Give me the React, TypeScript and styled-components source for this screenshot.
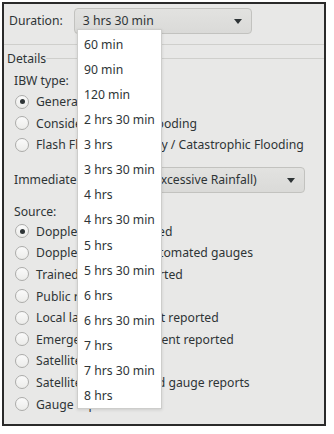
import React from "react";
import styled, { createGlobalStyle } from "styled-components";

const GlobalStyle = createGlobalStyle`
  body {
    margin: 0;
    background: #ffffff;
    font-family: "Noto Sans", "Open Sans", sans-serif;
    font-size: 12.2px;
    color: #2e3436;
  }
`;

const Page = styled.div`
  padding: 2px;
  width: 334px;
  height: 434px;
  box-sizing: border-box;
`;

const Frame = styled.div`
  position: relative;
  width: 324px;
  height: 424px;
  box-sizing: border-box;
  border: 2px solid #2a2a2a;
  background: #e8e8e7;
  overflow: hidden;
`;

const TopBar = styled.div`
  height: 40px;
  display: flex;
  align-items: flex-start;
  padding: 4px 0 0 5px;
  box-sizing: border-box;
  gap: 11px;
`;

const Label = styled.div<{ $height?: number }>`
  height: ${(p) => p.$height ?? 26}px;
  line-height: ${(p) => p.$height ?? 26}px;
  white-space: nowrap;
`;

const Combo = styled.div<{ $width?: number }>`
  position: relative;
  ${(p) => (p.$width ? `width: ${p.$width}px;` : "flex: 1;")}
  height: 26px;
  line-height: 24px;
  box-sizing: border-box;
  padding-left: 8px;
  border: 1px solid #c2c2bf;
  border-radius: 4px;
  background: linear-gradient(#e2e2e0, #dadad8);
  white-space: nowrap;
  overflow: hidden;
`;

const Arrow = styled.span`
  position: absolute;
  right: 9px;
  top: 10px;
  width: 0;
  height: 0;
  border-left: 4.5px solid transparent;
  border-right: 4.5px solid transparent;
  border-top: 5px solid #2e3436;
`;

const Separator = styled.div`
  height: 1px;
  background: #cfcfcc;
`;

const GroupTitle = styled.div`
  height: 26px;
  display: flex;
  align-items: center;
  padding-left: 3px;
`;

const TitleLine = styled.div`
  flex: 1;
  height: 1px;
  margin-top: 1px;
  background: #cfcfcc;
`;

const GroupBody = styled.div`
  padding: 0 19px 0 10px;
  display: flex;
  flex-direction: column;
`;

const RadioRow = styled.div<{ $h: number }>`
  height: ${(p) => p.$h}px;
  display: flex;
  align-items: center;
  gap: 7px;
  padding-left: 1px;
  white-space: nowrap;
`;

const RadioCircle = styled.span<{ $checked?: boolean }>`
  flex-shrink: 0;
  width: 14px;
  height: 14px;
  box-sizing: border-box;
  border-radius: 50%;
  border: 1px solid #acacaa;
  background: linear-gradient(#fafafa, #ececea);
  display: flex;
  align-items: center;
  justify-content: center;

  &::after {
    content: "";
    width: 5px;
    height: 5px;
    border-radius: 50%;
    background: ${(p) => (p.$checked ? "#2e3436" : "transparent")};
  }
`;

const ImmediateRow = styled.div`
  margin-top: 11px;
  display: flex;
  align-items: center;
  gap: 6px;
`;

const SourceLabel = styled(Label)`
  margin-top: 9px;
`;

const Popup = styled.div`
  position: absolute;
  left: 73px;
  top: 25px;
  width: 85px;
  height: 380px;
  box-sizing: border-box;
  padding-top: 2px;
  background: #ffffff;
  border: 1px solid #cdcdcb;
  box-shadow: 0 1px 3px rgba(0, 0, 0, 0.12);
`;

const PopupItem = styled.div`
  height: 25.07px;
  line-height: 25px;
  padding-left: 6px;
  white-space: nowrap;
  color: #2e3436;
`;

const ibwTypes = [
  "General",
  "Considerable Flash Flooding",
  "Flash Flood Emergency / Catastrophic Flooding",
];

const sources = [
  "Doppler radar indicated",
  "Doppler radar and automated gauges",
  "Trained spotters reported",
  "Public reported",
  "Local law enforcement reported",
  "Emergency management reported",
  "Satellite estimates",
  "Satellite estimates and gauge reports",
  "Gauge reports",
];

const durations = [
  "60 min",
  "90 min",
  "120 min",
  "2 hrs 30 min",
  "3 hrs",
  "3 hrs 30 min",
  "4 hrs",
  "4 hrs 30 min",
  "5 hrs",
  "5 hrs 30 min",
  "6 hrs",
  "6 hrs 30 min",
  "7 hrs",
  "7 hrs 30 min",
  "8 hrs",
];

const Radio = ({
  label,
  checked,
  h,
}: {
  label: string;
  checked?: boolean;
  h: number;
}) => (
  <RadioRow $h={h}>
    <RadioCircle $checked={checked} />
    <span>{label}</span>
  </RadioRow>
);

const App = () => {
  return (
    <Page>
      <GlobalStyle />
      <Frame>
        <TopBar>
          <Label>Duration:</Label>
          <Combo $width={178}>
            3 hrs 30 min
            <Arrow />
          </Combo>
        </TopBar>
        <Separator />
        <GroupTitle>
          Details
          <TitleLine />
        </GroupTitle>
        <GroupBody>
          <Label $height={20}>IBW type:</Label>
          {ibwTypes.map((t, i) => (
            <Radio key={t} label={t} checked={i === 0} h={21.5} />
          ))}
          <ImmediateRow>
            <Label>Immediate Cause:</Label>
            <Combo>
              ER (Excessive Rainfall)
              <Arrow />
            </Combo>
          </ImmediateRow>
          <SourceLabel $height={19}>Source:</SourceLabel>
          {sources.map((s, i) => (
            <Radio key={s} label={s} checked={i === 0} h={21.6} />
          ))}
        </GroupBody>
        <Popup>
          {durations.map((d) => (
            <PopupItem key={d}>{d}</PopupItem>
          ))}
        </Popup>
      </Frame>
    </Page>
  );
};

export default App;
